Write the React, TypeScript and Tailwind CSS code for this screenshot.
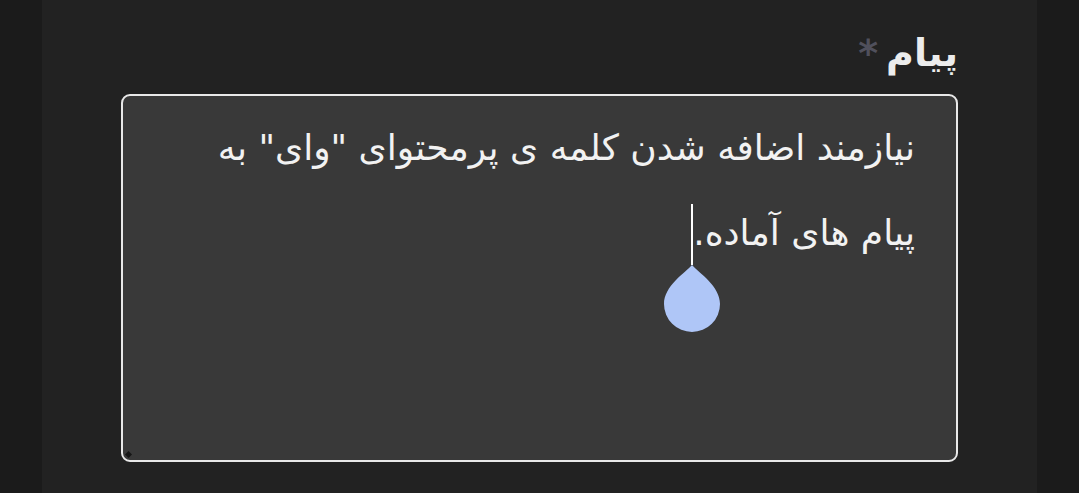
import React from "react";

const App = () => {
  return (
    <div className="flex h-[493px] w-full bg-[#1b1b1b] px-[42px]">
      <div
        dir="rtl"
        className="flex flex-1 flex-col bg-[#222222] pl-[79px] pr-[79px] pt-[12px]"
        style={{ fontFamily: '"DejaVu Sans", "Noto Sans", sans-serif' }}
      >
        <label className="flex h-[82px] items-center gap-[8px] text-[38px] font-bold text-[#ececec]">
          <span>پیام</span>
          <span className="text-[#50505c]">*</span>
        </label>
        <div className="relative h-[368px] w-full rounded-[9px] border-2 border-[#e9e9e9] bg-[#393939] pr-[41px] pt-[9px] text-[36px] leading-[85px] text-[#f2f2f2]">
          <div>نیازمند اضافه شدن کلمه ی پرمحتوای "وای" به</div>
          <div className="flex">
            <span>پیام های آماده.</span>
            <span className="relative">
              <span className="absolute right-0 top-[14px] h-[61px] w-[2px] bg-white" />
              <svg
                className="absolute right-[-28px] top-[74px]"
                width="58"
                height="70"
                viewBox="0 0 58 70"
              >
                <path
                  d="M29 1 C36 9 57 22 57 40 A28 28 0 0 1 1 40 C1 22 22 9 29 1 Z"
                  fill="#afc6f7"
                />
              </svg>
            </span>
          </div>
          <span className="absolute bottom-[3px] left-[3px] h-[5px] w-[5px] rotate-45 bg-[#151515]" />
        </div>
      </div>
    </div>
  );
};

export default App;
